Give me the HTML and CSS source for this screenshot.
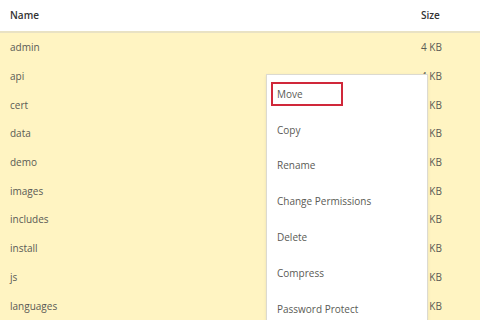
FILE: index.html
```html
<!DOCTYPE html>
<html lang="en">
<head>
    <meta charset="UTF-8">
    <title>File Manager</title>
    <link rel="stylesheet" href="styles.css">
</head>
<body>
    <div class="file-list">
        <div class="row head">
            <span class="name">Name</span>
            <span class="size">Size</span>
        </div>
        <div class="row"><span class="name">admin</span><span class="size">4 KB</span></div>
        <div class="row"><span class="name">api</span><span class="size">4 KB</span></div>
        <div class="row"><span class="name">cert</span><span class="size">4 KB</span></div>
        <div class="row"><span class="name">data</span><span class="size">4 KB</span></div>
        <div class="row"><span class="name">demo</span><span class="size">4 KB</span></div>
        <div class="row"><span class="name">images</span><span class="size">4 KB</span></div>
        <div class="row"><span class="name">includes</span><span class="size">4 KB</span></div>
        <div class="row"><span class="name">install</span><span class="size">4 KB</span></div>
        <div class="row"><span class="name">js</span><span class="size">4 KB</span></div>
        <div class="row"><span class="name">languages</span><span class="size">4 KB</span></div>
    </div>

    <ul class="context-menu">
        <li class="active"><span>Move</span></li>
        <li><span>Copy</span></li>
        <li><span>Rename</span></li>
        <li><span>Change Permissions</span></li>
        <li><span>Delete</span></li>
        <li><span>Compress</span></li>
        <li><span>Password Protect</span></li>
    </ul>
</body>
</html>
```
FILE: styles.css
```css
html, body { height: 320px; overflow: hidden; }
body { margin: 0; font-family: "Open Sans", "Noto Sans", sans-serif; font-size: 10px; color: #5a5a55; background-color: #fff4c2; }
.file-list { display: flex; flex-direction: column; }
.row { display: flex; align-items: center; height: 28.7px; padding: 0 37px 0 10px; }
.row .name { flex: 1; }
.row .size { width: 22px; white-space: nowrap; }
.row.head { height: 29px; padding-bottom: 2px; background-color: #ffffff; border-bottom: 2px solid #e9e2c4; color: #333; font-weight: 600; }
.context-menu { position: absolute; left: 266px; top: 74px; width: 160px; height: 245px; margin: 0; padding: 1px 0 0; overflow: hidden; list-style: none; background-color: #ffffff; border: 1px solid #dcdad0; border-bottom: none; box-shadow: 0 1px 3px rgba(0, 0, 0, 0.08); }
.context-menu li { display: flex; align-items: center; height: 35.8px; padding-left: 4px; }
.context-menu li span { display: inline-flex; align-items: center; height: 20px; padding: 0 4px; border: 2px solid transparent; }
.context-menu li.active span { width: 60px; border-color: #d0283a; }
```
